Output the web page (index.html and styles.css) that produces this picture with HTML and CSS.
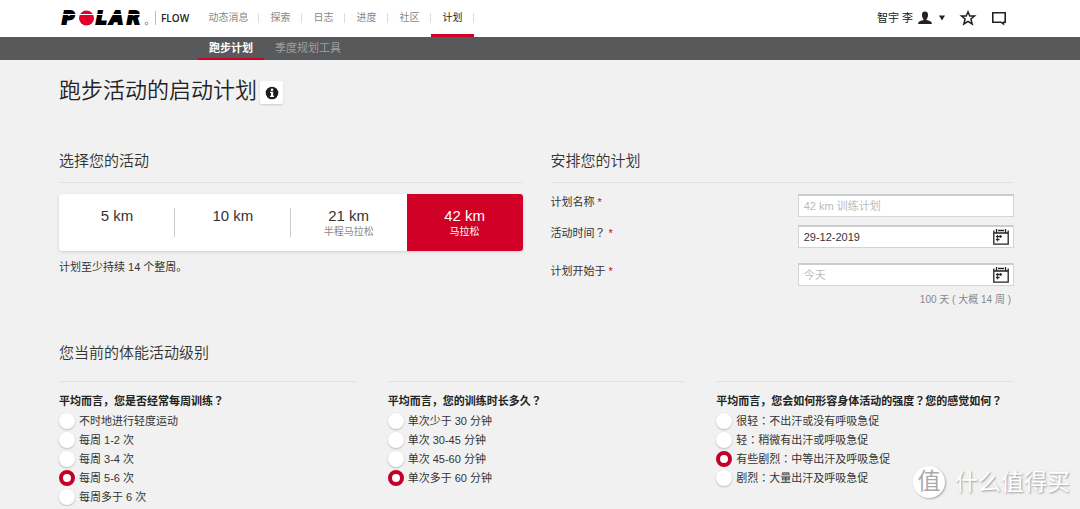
FILE: index.html
```html
<!DOCTYPE html>
<html lang="zh-CN">
<head>
<meta charset="utf-8">
<meta name="viewport" content="width=device-width, initial-scale=1">
<title>Polar Flow</title>
<link rel="stylesheet" href="styles.css">
</head>
<body>
<header class="topbar">
  <a class="brand" href="#">
    <svg class="logo" width="90" height="22" viewBox="0 0 90 22" role="img" aria-label="POLAR">
      <g class="logo-letters">
        <text x="3" y="17">P</text><text x="37" y="17">L</text><text x="51" y="17">A</text><text x="68" y="17">R</text>
      </g>
      <circle cx="27.500" cy="11" r="7.500" fill="#e4002b"/>
      <path d="M4 7.500H85" stroke="#fff" stroke-width="1"/>
      <circle cx="87.500" cy="16.500" r="1.300" fill="none" stroke="#777" stroke-width=".8"/>
    </svg>
    <span class="flow">FLOW</span>
  </a>
  <nav class="mainnav">
    <a class="first" href="#">动态消息</a><a href="#">探索</a><a href="#">日志</a><a href="#">进度</a><a href="#">社区</a><a class="active" href="#">计划</a>
  </nav>
  <div class="tools">
    <button class="user" type="button">智宇 李
      <svg width="14" height="14" viewBox="0 0 14 14"><path d="M7 0.500C9.300 .5 10 2 10 4S9.200 7.500 8.500 8V9L12 10Q14 10.800 13.900 13H.1Q0 10.800 2 10L5.500 9V8C4.800 7.500 4 6 4 4S4.700 .5 7 .5Z" fill="#222"/></svg>
      <svg width="6" height="6" viewBox="0 0 6 6"><path d="M0 .5H6L3 5.500Z" fill="#222"/></svg>
    </button>
    <button type="button" aria-label="收藏"><svg width="16" height="16" viewBox="0 0 16 16"><path d="M8 1.800L9.800 6H14.500L10.900 9L12.200 14L8 11.300L3.800 14L5.100 9L1.500 6H6.200Z" fill="none" stroke="#222" stroke-width="1.500"/></svg></button>
    <button type="button" aria-label="消息"><svg width="16" height="16" viewBox="0 0 16 16"><path d="M1.800 2.700H14.200V12.200H12.500V14L10 12.200H1.800Z" fill="none" stroke="#222" stroke-width="1.600"/></svg></button>
  </div>
</header>
<nav class="subnav">
  <a class="active" href="#">跑步计划</a><a href="#">季度规划工具</a>
</nav>
<main class="page">
  <div class="title">
    <h1>跑步活动的启动计划</h1>
    <button class="info" type="button" aria-label="信息"><svg width="14" height="14" viewBox="0 0 14 14"><circle cx="7" cy="7" r="6.300" fill="#1c1c1c"/><circle cx="7" cy="3.700" r="1.300" fill="#fff"/><path d="M5 5.800H8.200V9.700H9V11H5V9.700H6V7H5Z" fill="#fff"/></svg></button>
  </div>

  <div class="two">
    <section>
      <h2>选择您的活动</h2>
      <div class="events">
        <button type="button"><b>5 km</b></button>
        <button type="button"><b>10 km</b></button>
        <button type="button"><b>21 km</b><small>半程马拉松</small></button>
        <button class="selected" type="button"><b>42 km</b><small>马拉松</small></button>
      </div>
      <p class="note">计划至少持续 14 个整周。</p>
    </section>
    <section>
      <h2>安排您的计划</h2>
      <div class="row">
        <label for="name">计划名称 <i>*</i></label>
        <div class="field"><input id="name" type="text" placeholder="42 km 训练计划"></div>
      </div>
      <div class="row spaced">
        <label for="date">活动时间<span class="mark" lang="ja">？</span> <i>*</i></label>
        <div class="field"><input id="date" type="text" value="29-12-2019">
          <svg class="cal" width="16" height="16" viewBox="0 0 16 16"><path d="M.8 4H15.200V15.200H.8ZM.8 5V1.500M15.200 5V1.500M3.500 0V4M12.500 0V4M5 1.500H11M3 7.500H9M3 10.500H6.500" fill="none" stroke="#222" stroke-width="1.300"/><path d="M4.500 6V12.500M7.500 6V9" stroke="#222" stroke-width=".8"/></svg></div>
      </div>
      <div class="row">
        <label for="start">计划开始于 <i>*</i></label>
        <div class="field"><input id="start" type="text" placeholder="今天">
          <svg class="cal" width="16" height="16" viewBox="0 0 16 16"><path d="M.8 4H15.200V15.200H.8ZM.8 5V1.500M15.200 5V1.500M3.500 0V4M12.500 0V4M5 1.500H11M3 7.500H9M3 10.500H6.500" fill="none" stroke="#222" stroke-width="1.300"/><path d="M4.500 6V12.500M7.500 6V9" stroke="#222" stroke-width=".8"/></svg></div>
      </div>
      <p class="duration">100 天 ( 大概 14 周 )</p>
    </section>
  </div>

  <h2 class="level">您当前的体能活动级别</h2>
  <div class="three">
    <fieldset>
      <legend>平均而言，您是否经常每周训练<span class="mark" lang="ja">？</span></legend>
      <label><input type="radio" name="freq">不时地进行轻度运动</label>
      <label><input type="radio" name="freq">每周 1-2 次</label>
      <label><input type="radio" name="freq">每周 3-4 次</label>
      <label><input type="radio" name="freq" checked>每周 5-6 次</label>
      <label><input type="radio" name="freq">每周多于 6 次</label>
    </fieldset>
    <fieldset>
      <legend>平均而言，您的训练时长多久<span class="mark" lang="ja">？</span></legend>
      <label><input type="radio" name="dur">单次少于 30 分钟</label>
      <label><input type="radio" name="dur">单次 30-45 分钟</label>
      <label><input type="radio" name="dur">单次 45-60 分钟</label>
      <label><input type="radio" name="dur" checked>单次多于 60 分钟</label>
    </fieldset>
    <fieldset>
      <legend>平均而言，您会如何形容身体活动的强度<span class="mark" lang="ja">？</span>您的感觉如何<span class="mark" lang="ja">？</span></legend>
      <label><input type="radio" name="int"><span>很轻<span class="mark" lang="ja">：</span>不出汗或没有呼吸急促</span></label>
      <label><input type="radio" name="int"><span>轻<span class="mark" lang="ja">：</span>稍微有出汗或呼吸急促</span></label>
      <label><input type="radio" name="int" checked><span>有些剧烈<span class="mark" lang="ja">：</span>中等出汗及呼吸急促</span></label>
      <label><input type="radio" name="int"><span>剧烈<span class="mark" lang="ja">：</span>大量出汗及呼吸急促</span></label>
    </fieldset>
  </div>
</main>
<div class="watermark"><span class="seal">值</span><span>什么值得买</span></div>
</body>
</html>
```
FILE: styles.css
```css
* { box-sizing: border-box; }
html, body { overflow: hidden; }
body {
  margin: 0;
  background: #f1f1f1;
  color: #333;
  font: 11px/16px "Liberation Sans", "Noto Sans CJK SC", sans-serif;
}
a { color: inherit; text-decoration: none; }
button { border: 0; padding: 0; background: none; font: inherit; color: inherit; cursor: pointer; }
h1, h2, p, fieldset { margin: 0; padding: 0; border: 0; }
svg { display: block; flex: none; overflow: visible; }
.mark { font-family: "Noto Sans CJK JP", sans-serif; line-height: 1; }

.topbar { display: flex; height: 37px; background: #fff; padding: 0 73px 0 59px; }
.brand { display: flex; align-items: center; width: 139px; padding-bottom: 1px; }
.logo-letters { font: italic bold 17px "DejaVu Sans", sans-serif; fill: #000; stroke: #000; stroke-width: 2px; }
.flow { margin-left: 6px; padding-left: 5px; border-left: 1px solid #bbb; font: 600 10px/14px "Open Sans", sans-serif; color: #222; }
.mainnav { display: flex; font-size: 10px; color: #888; }
.mainnav a { position: relative; width: 43px; line-height: 36px; text-align: center; border-bottom: 3px solid transparent; }
.mainnav a.first { width: 61px; }
.mainnav a::after { content: ""; position: absolute; right: 0; top: 13px; width: 1px; height: 10px; background: #ddd; }
.mainnav a.active { color: #222; border-color: #d10027; }
.tools { display: flex; align-items: center; gap: 15px; margin-left: auto; padding-bottom: 2px; }
.user { display: flex; align-items: center; gap: 5px; color: #222; }
.user svg + svg { margin-left: 2px; }

.subnav { display: flex; height: 23px; padding-left: 198px; background: #58595b; color: #a0a0a0; line-height: 23px; }
.subnav a { padding: 0 11px; }
.subnav a.active { color: #fff; font-weight: bold; border-bottom: 2px solid #d10027; }

.page { padding: 0 66px 0 59px; }
.title { display: flex; align-items: center; gap: 3px; padding-top: 15px; }
h1 { font-size: 22px; line-height: 32px; font-weight: 350; color: #222; }
.info { display: grid; place-items: center; width: 23px; height: 23px; margin-top: 3px; background: #fff; border-radius: 2px; box-shadow: 0 1px 2px #ccc; }
.two { display: grid; grid-template-columns: 1fr 1fr; gap: 28px; padding-top: 43px; }
h2 { font-size: 15px; line-height: 22px; font-weight: 350; }
.two h2 { padding-bottom: 10px; border-bottom: 1px solid #e2e2e2; margin-bottom: 11px; }
.events { display: flex; height: 57px; background: #fff; border-radius: 3px; box-shadow: 0 1px 3px #ccc; }
.events button { position: relative; flex: 1; display: flex; flex-direction: column; align-items: center; padding-top: 13px; }
.events button:nth-child(-n+2)::after { content: ""; position: absolute; right: 0; top: 14px; width: 1px; height: 29px; background: #ccc; }
.events b { font-size: 15px; line-height: 18px; font-weight: normal; }
.events small { font-size: 10px; line-height: 14px; color: #888; }
.events .selected { background: #d10027; border-radius: 0 3px 3px 0; color: #fff; }
.events .selected small { color: #fff; }
.note { padding-top: 8px; }

.row { display: grid; grid-template-columns: 8fr 7fr; height: 23px; margin-bottom: 8px; }
.row.spaced { margin-bottom: 15px; }
.row i { color: #d10027; font-style: normal; }
.field { position: relative; }
.field input { display: block; width: 100%; height: 23px; padding: 0 28px 0 5px; border: 1px solid #d4d4d4; border-top: 2px solid #ccc; border-radius: 0; background: #fff; font: inherit; color: #333; }
.field input::placeholder { color: #bbb; }
.cal { position: absolute; right: 5px; top: 4px; }
.duration { text-align: right; padding-right: 3px; margin-top: -2px; font-size: 10px; color: #888; }

.level { padding-top: 34px; padding-bottom: 17px; }
.three { display: grid; grid-template-columns: 1fr 1fr 1fr; gap: 31px; }
.three fieldset { display: flex; flex-direction: column; min-width: 0; border-top: 1px solid #e2e2e2; }
.three legend { float: left; height: 29px; padding: 11px 0 0; font-weight: bold; color: #222; white-space: nowrap; }
.three label { display: flex; align-items: center; gap: 4px; height: 19px; }
.three input { appearance: none; flex: none; width: 16px; height: 16px; margin: 0; border-radius: 50%; background: #fff; box-shadow: 0 1px 2px #bbb; }
.three input:checked { border: 4px solid #c4002a; box-shadow: none; }

.watermark { position: absolute; right: 10px; bottom: 10px; display: flex; align-items: center; gap: 10px; color: #fff; font-size: 23px; line-height: 34px; text-shadow: 1px 1px 2px #999; }
.seal { width: 32px; height: 32px; border-radius: 50%; background: #fff; color: #aaa; text-align: center; line-height: 30px; text-shadow: none; box-shadow: 1px 1px 2px #aaa; }
```
